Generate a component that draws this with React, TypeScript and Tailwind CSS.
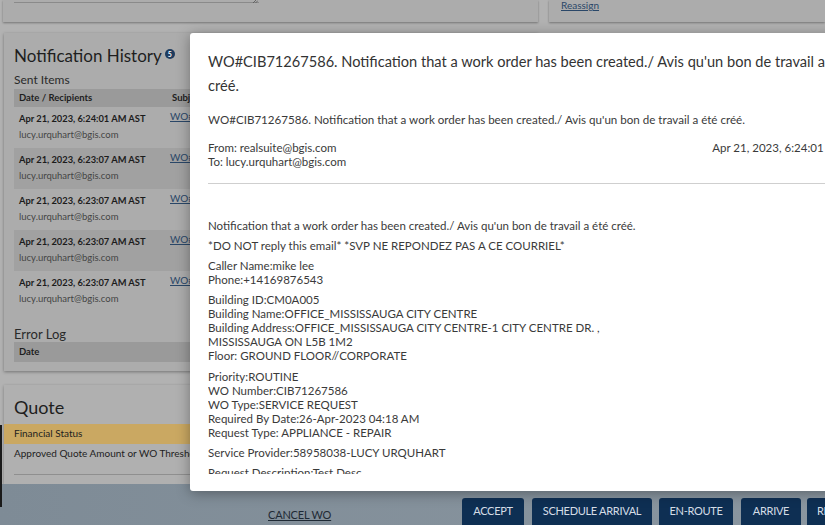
import React from "react";

const rows = [
  "Apr 21, 2023, 6:24:01 AM AST",
  "Apr 21, 2023, 6:23:07 AM AST",
  "Apr 21, 2023, 6:23:07 AM AST",
  "Apr 21, 2023, 6:23:07 AM AST",
  "Apr 21, 2023, 6:23:07 AM AST",
];

export default function App() {
  return (
    <div className="relative w-[825px] h-[525px] overflow-hidden bg-[#b2b2b2] font-['Lato','Noto_Sans',sans-serif] text-[#222]">
      {/* background page */}
      <div className="flex flex-col h-full">
        <div className="flex h-[22px] pl-[3px] gap-[11px]">
          <div className="w-[535px] h-full bg-[#acacac] shadow-[0_1px_2px_rgba(0,0,0,0.35)] pl-[11px]">
            <div className="relative w-[245px] h-[3px] border-b border-[#8a8a8a]">
              <svg className="absolute right-[1px] -top-[3px]" width="6" height="6" viewBox="0 0 6 6">
                <path d="M1 6 L6 1 M3.5 6 L6 3.5" stroke="#555" strokeWidth="0.8" />
              </svg>
            </div>
          </div>
          <div className="flex-1 h-full bg-[#acacac] shadow-[0_1px_2px_rgba(0,0,0,0.35)] pl-[12px]">
            <span className="block text-[10px] leading-[10px] text-[#2a4768] underline">Reassign</span>
          </div>
        </div>

        <div className="mt-[11px] ml-[4px] w-[534px] h-[340px] bg-[#acacac] shadow-[0_1px_3px_rgba(0,0,0,0.35)] px-[10px] pt-[12px]">
          <div className="flex items-start">
            <span className="text-[17px] leading-[22px] text-[#1e1e1e]">Notification History</span>
            <span className="ml-[3px] mt-[4px] w-[10px] h-[10px] rounded-full bg-[#1d3b5e] text-white text-[7px] leading-[10px] text-center font-bold">5</span>
          </div>
          <div className="mt-[6px] text-[12px] leading-[14px] text-[#2a2a2a]">Sent Items</div>
          <div className="mt-[2px]">
            <div className="flex h-[18px] items-center bg-[#9a9a9a] text-[9.5px] font-bold text-[#1e1e1e]">
              <div className="w-[158px] pl-[5px] whitespace-nowrap">Date / Recipients</div>
              <div className="whitespace-nowrap">Subject</div>
            </div>
            {rows.map((d, i) => (
              <div key={i} className={`flex h-[41px] ${i % 2 === 1 ? "bg-[#a1a1a1]" : ""}`}>
                <div className="w-[156px] pl-[5px] pt-[5px]">
                  <div className="text-[9.3px] leading-[14px] font-bold text-[#1c1c1c] whitespace-nowrap">{d}</div>
                  <div className="mt-[3px] text-[9.5px] leading-[12px] text-[#454545] whitespace-nowrap">lucy.urquhart@bgis.com</div>
                </div>
                <div className="pt-[2px] text-[10px] leading-[14px] text-[#2a4768] underline whitespace-nowrap">WO#CIB71267586</div>
              </div>
            ))}
          </div>
          <div className="mt-[14px] text-[13px] leading-[16px] text-[#2a2a2a]">Error Log</div>
          <div className="flex h-[20px] items-center bg-[#9a9a9a] text-[9.5px] font-bold text-[#1e1e1e] pl-[5px]">Date</div>
        </div>

        <div className="mt-[14px] ml-[4px] w-[534px] h-[100px] bg-[#b0b0b0] shadow-[0_1px_3px_rgba(0,0,0,0.3)] pt-[11px]">
          <div className="px-[10px] text-[18px] leading-[22px] text-[#1e1e1e]">Quote</div>
          <div className="mt-[6px] h-[20px] flex items-center px-[10px] bg-[#caa862] text-[10px] text-[#1e1e1e]">Financial Status</div>
          <div className="h-[20px] flex items-center px-[10px] text-[10px] text-[#1e1e1e] whitespace-nowrap">Approved Quote Amount or WO Threshold</div>
          <div className="mx-[10px] mt-[10px] border-t border-[#8f8f8f]"></div>
        </div>

        <div className="flex-1 bg-gradient-to-r from-[#7e8b96] to-[#8a96a0] flex">
          <div className="w-[462px] shrink-0 pl-[268px] pt-[17px]">
            <span className="text-[11px] leading-[13px] text-[#1f2a35] underline whitespace-nowrap tracking-[-0.2px]">CANCEL WO</span>
          </div>
          <div className="flex self-end">
            <div className="w-[62px] h-[27px] flex items-center justify-center rounded-t-[3px] bg-[#0e2f53] text-[11px] text-[#d5dde6] tracking-[-0.3px] whitespace-nowrap">ACCEPT</div>
            <div className="ml-[8px] w-[120px] h-[27px] flex items-center justify-center rounded-t-[3px] bg-[#0e2f53] text-[11px] text-[#d5dde6] tracking-[-0.3px] whitespace-nowrap">SCHEDULE ARRIVAL</div>
            <div className="ml-[7px] w-[74px] h-[27px] flex items-center justify-center rounded-t-[3px] bg-[#0e2f53] text-[11px] text-[#d5dde6] tracking-[-0.3px] whitespace-nowrap">EN-ROUTE</div>
            <div className="ml-[8px] w-[60px] h-[27px] flex items-center justify-center rounded-t-[3px] bg-[#0e2f53] text-[11px] text-[#d5dde6] tracking-[-0.3px] whitespace-nowrap">ARRIVE</div>
            <div className="ml-[6px] w-[70px] h-[27px] flex items-center pl-[10px] rounded-t-[3px] bg-[#0e2f53] text-[11px] text-[#d5dde6] tracking-[-0.3px] whitespace-nowrap">REJECT</div>
          </div>
        </div>
      </div>

      <div className="absolute left-0 top-[425px] w-[2px] h-[82px] bg-[#1a1a1a]"></div>

      {/* modal */}
      <div className="absolute left-[190px] top-[33px] w-[700px] h-[458px] bg-white rounded-[3px] shadow-[0_2px_14px_rgba(0,0,0,0.35)] flex flex-col px-[18px] pt-[17px] pb-[17px] text-[#3a3a3a]">
        <div className="text-[14.6px] leading-[24px] text-[#333]">
          WO#CIB71267586. Notification that a work order has been created./ Avis qu'un bon de travail a été créé.
        </div>
        <div className="mt-[15px] text-[11.6px] leading-[14px] whitespace-nowrap">
          WO#CIB71267586. Notification that a work order has been created./ Avis qu'un bon de travail a été créé.
        </div>
        <div className="mt-[14px] flex justify-between text-[11.5px] leading-[14px]">
          <div>
            <div>From: realsuite@bgis.com</div>
            <div>To: lucy.urquhart@bgis.com</div>
          </div>
          <div className="whitespace-nowrap pr-[4px]">Apr 21, 2023, 6:24:01 AM AST</div>
        </div>
        <div className="mt-[14px] border-t-[1.5px] border-[#cfcfcf]"></div>
        <div className="mt-[35px] flex-1 overflow-hidden text-[11.5px] leading-[14px]">
          <div>Notification that a work order has been created./ Avis qu'un bon de travail a été créé.</div>
          <div className="mt-[6px]">*DO NOT reply this email* *SVP NE REPONDEZ PAS A CE COURRIEL*</div>
          <div className="mt-[6px]">
            <div>Caller Name:mike lee</div>
            <div>Phone:+14169876543</div>
          </div>
          <div className="mt-[6px]">
            <div>Building ID:CM0A005</div>
            <div>Building Name:OFFICE_MISSISSAUGA CITY CENTRE</div>
            <div>Building Address:OFFICE_MISSISSAUGA CITY CENTRE-1 CITY CENTRE DR. ,</div>
            <div>MISSISSAUGA ON L5B 1M2</div>
            <div>Floor: GROUND FLOOR//CORPORATE</div>
          </div>
          <div className="mt-[7px]">
            <div>Priority:ROUTINE</div>
            <div>WO Number:CIB71267586</div>
            <div>WO Type:SERVICE REQUEST</div>
            <div>Required By Date:26-Apr-2023 04:18 AM</div>
            <div>Request Type: APPLIANCE - REPAIR</div>
          </div>
          <div className="mt-[6px]">Service Provider:58958038-LUCY URQUHART</div>
          <div className="mt-[6px]">Request Description:Test Desc</div>
        </div>
      </div>
    </div>
  );
}
